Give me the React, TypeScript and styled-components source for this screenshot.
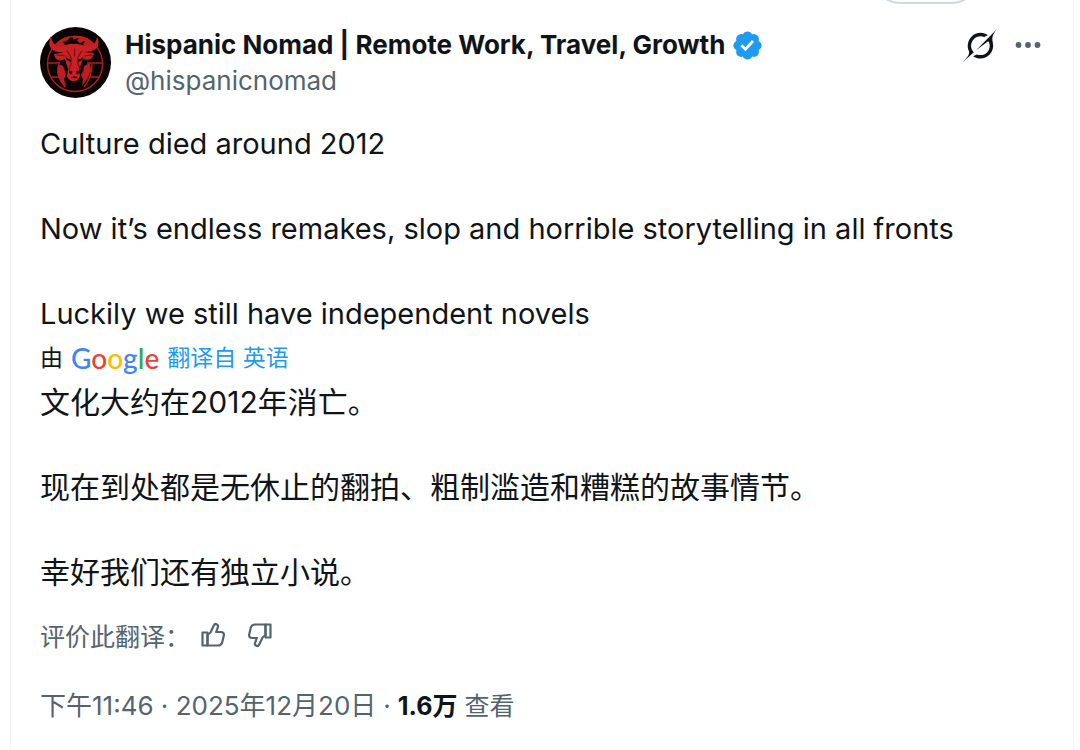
import React from 'react';
import styled, { createGlobalStyle } from 'styled-components';

const fontStack = '"Inter", "Noto Sans CJK SC", sans-serif';
const ink = '#0f1419';
const muted = '#536471';
const blue = '#1d9bf0';

const GlobalStyle = createGlobalStyle`
  *, *::before, *::after { box-sizing: border-box; }
  body {
    margin: 0;
    background: #fff;
    color: ${ink};
    font-family: ${fontStack};
  }
`;

const Column = styled.main`
  min-height: 100vh;
  margin: 0 6px 0 10px;
  border: solid #eff3f4;
  border-width: 0 1px;
`;

const PreviousBar = styled.div`
  display: flex;
  justify-content: flex-end;
  align-items: flex-end;
  height: 4px;
  padding-right: 92px;
  overflow: hidden;
`;

const OutlinePill = styled.button`
  flex: none;
  width: 110px;
  height: 60px;
  border: 2px solid #cfd9de;
  border-radius: 30px;
  background: #fff;
`;

const Post = styled.article`
  padding: 23px 29px 24px;
`;

const Header = styled.header`
  display: flex;
  align-items: flex-start;
  gap: 14px;
`;

const AvatarLink = styled.a`
  flex: none;
  display: block;
  height: 71px;
`;

const Names = styled.div`
  flex: 1;
  min-width: 0;
`;

const NameRow = styled.div`
  display: flex;
  align-items: center;
  gap: 6px;
  height: 36px;
`;

const NameLink = styled.a`
  color: ${ink};
  font-size: 26px;
  font-weight: 700;
  line-height: 36px;
  white-space: nowrap;
  text-decoration: none;
`;

const Handle = styled.a`
  display: block;
  color: ${muted};
  font-size: 26px;
  line-height: 36px;
  text-decoration: none;
`;

const Actions = styled.div`
  display: flex;
  align-items: center;
  gap: 15px;
  height: 36px;
`;

const IconButton = styled.button`
  display: flex;
  padding: 0;
  border: 0;
  background: none;
  color: ${(p) => p.color ?? muted};
  cursor: pointer;
`;

const Body = styled.div`
  display: grid;
  gap: 43px;
  font-size: 30px;
  line-height: 42px;
`;

const Original = styled(Body)`
  margin-top: 24px;
  font-size: 29px;
`;

const Paragraph = styled.p`
  margin: 0;
`;

const Attribution = styled.div`
  display: flex;
  align-items: center;
  gap: 8px;
  height: 46px;
  font-size: 23px;
  line-height: 46px;
`;

const GoogleWord = styled.span`
  font-family: "Lato", sans-serif;
  font-size: 28px;
  font-weight: 500;
  line-height: 42px;
`;

const Letter = styled.span<{ $tint: string }>`
  color: ${(p) => p.$tint};
`;

const SourceLink = styled.a`
  color: ${blue};
  text-decoration: none;
`;

const Rating = styled.div`
  display: flex;
  align-items: center;
  height: 36px;
  margin-top: 24px;
  color: ${muted};
  font-size: 25px;
`;

const Thumbs = styled.div`
  display: flex;
  gap: 21px;
  margin-left: 10px;
`;

const Meta = styled.div`
  display: flex;
  gap: 7px;
  margin-top: 35px;
  color: ${muted};
  font-size: 26px;
  line-height: 36px;
`;

const MetaLink = styled.a`
  color: inherit;
  text-decoration: none;
`;

const Views = styled.span`
  font-size: 25px;
`;

const ViewCount = styled.strong`
  color: ${ink};
  font-weight: 700;
`;

const googleLetters: [string, string][] = [
  ['G', '#4285f4'],
  ['o', '#ea4335'],
  ['o', '#fbbc05'],
  ['g', '#4285f4'],
  ['l', '#34a853'],
  ['e', '#ea4335'],
];

function BullAvatar() {
  return (
    <svg width="71" height="71" viewBox="0 0 71 71" aria-hidden="true">
      <circle cx="35.5" cy="35.5" r="35.5" fill="#0b0405" />
      <g fill="none" stroke="#b01d1f" strokeWidth="1.4">
        <circle cx="35" cy="37" r="27.5" />
        <path d="M8 36h12M47 36h15M11 50h14M43 50h16M44 60c5-6 8-14 8-23M25 60c-4-5-7-12-7-20" />
      </g>
      <g fill="#bb1f21">
        <path d="M15 18c4-5 9-8 15-9l-2 4-5 2 2 3-4 2zM33 9c9-1 17 2 22 9l-8 2-4-2 2-4-5 2-3-2 2-3-6 1z" />
        <path d="M18 37l5 2 3 8-2 5 2 8-6-6-3-8zM50 36l-6 3-3 9 2 4-1 7 5-7 4-9z" />
      </g>
      <path
        fill="#c92123"
        d="M11 9c-4 9-1 15 8 16l5 .5-10 1.500c1 6 5 8 11 5l3 10-1 7c1 3 3 5 6.500 5s5.500-2 6.500-5l-1-7 4-10c6 2 10 0 11-6l-10-1 5-.500c8-1 12-7 8-15-1 7-4 10-11 9.500-4-1.500-8-2-13-2s-7 .5-11 2c-7 .5-10-2.500-11-10z"
      />
      <path
        fill="none"
        stroke="#6a1213"
        strokeWidth="1.1"
        strokeLinecap="round"
        d="M17 28c3 0 5 0 8 1M53 28c-3 0-5 0-8 1M27 24l4 6v8l-2 4M42 24l-4 6v8l3 4M34.500 22v7"
      />
      <path fill="#1a0506" d="M25.500 30l5.500 3v2l-4.500-2zM43.500 30l-5.500 3v2l4.500-2zM29 43l3.500 1.500-1 3-2.500-1.500zM39.500 43l-3.500 1.500 1 3 2.500-1.500zM31 50.500c2-1.200 5-1.200 7 0-2 1-5 1-7 0zM25 37l2 6-1 4zM44 37l-2 6 1 4z" />
    </svg>
  );
}

function VerifiedBadge() {
  return (
    <svg width="33" height="33" viewBox="0 0 22 22" fill={blue} role="img" aria-label="认证账号">
      <path d="M20.396 11c-.018-.646-.215-1.275-.57-1.816-.354-.54-.852-.972-1.438-1.246.223-.607.27-1.264.14-1.897-.131-.634-.437-1.218-.882-1.687-.47-.445-1.053-.75-1.687-.882-.633-.13-1.29-.083-1.897.14-.273-.587-.704-1.086-1.245-1.44S11.647 1.62 11 1.604c-.646.017-1.273.213-1.813.568s-.969.854-1.24 1.44c-.608-.223-1.267-.272-1.902-.14-.635.13-1.22.436-1.69.882-.445.47-.749 1.055-.878 1.688-.13.633-.08 1.29.144 1.896-.587.274-1.087.705-1.443 1.245-.356.54-.555 1.17-.574 1.817.02.647.218 1.276.574 1.817.356.54.856.972 1.443 1.245-.224.606-.274 1.263-.144 1.896.13.634.433 1.218.877 1.688.47.443 1.054.747 1.687.878.633.132 1.29.084 1.897-.136.274.586.705 1.084 1.246 1.439.54.354 1.17.551 1.816.569.647-.016 1.276-.213 1.817-.567s.972-.854 1.245-1.44c.604.239 1.266.296 1.903.164.636-.132 1.22-.447 1.68-.907.46-.46.776-1.044.908-1.681s.075-1.299-.165-1.903c.586-.274 1.084-.705 1.439-1.246.354-.54.551-1.17.569-1.816zM9.662 14.85l-3.429-3.428 1.293-1.302 2.072 2.072 4.4-4.794 1.347 1.246z" />
    </svg>
  );
}

function GrokIcon() {
  return (
    <svg width="34" height="33" viewBox="0 0 33 32" fill="currentColor" aria-hidden="true">
      <path d="M12.745 20.54l10.97-8.19c.539-.4 1.307-.244 1.564.38 1.349 3.288.746 7.241-1.938 9.955-2.683 2.714-6.417 3.31-9.83 1.954l-3.728 1.745c5.347 3.697 11.84 2.782 15.898-1.324 3.219-3.255 4.216-7.692 3.284-11.693l.008.009c-1.351-5.878.332-8.227 3.782-13.031L33 0l-4.54 4.59v-.014L12.743 20.544m-2.263 1.987c-3.837-3.707-3.175-9.446.1-12.755 2.42-2.449 6.388-3.448 9.852-1.979l3.72-1.737c-.67-.49-1.53-1.017-2.515-1.387-4.455-1.854-9.789-.931-13.41 2.728-3.483 3.523-4.579 8.94-2.697 13.561 1.405 3.454-.899 5.898-3.22 8.364C1.49 30.2.666 31.074 0 32l10.478-9.466" />
    </svg>
  );
}

function MoreIcon() {
  return (
    <svg width="32" height="32" viewBox="0 0 32 32" fill="currentColor" aria-hidden="true">
      <circle cx="6.5" cy="16" r="2.9" />
      <circle cx="16" cy="16" r="2.9" />
      <circle cx="25.5" cy="16" r="2.9" />
    </svg>
  );
}

function ThumbIcon({ down = false }: { down?: boolean }) {
  return (
    <svg width="26" height="26" viewBox="0 0 26 26" fill="none" stroke="currentColor" strokeWidth="2.2" strokeLinejoin="round" aria-hidden="true">
      <g transform={down ? 'rotate(180 13 13)' : undefined}>
        <path d="M2.5 10.5h5v13h-5z" />
        <path d="M7.5 13l3-2.500 2.700-5.700.8-1.600c.5-1 1.600-1.400 2.600-.9 1.200.5 1.700 1.700 1.300 2.900l-1.700 4.800h4.600c2.300 0 3.500 1.600 3 3.600l-1.500 6.300c-.6 2.300-2.200 3.600-4.500 3.600H7.500z" />
      </g>
    </svg>
  );
}

export default function App() {
  return (
    <>
      <GlobalStyle />
      <Column>
        <PreviousBar>
          <OutlinePill type="button" aria-label="回复" />
        </PreviousBar>
        <Post>
          <Header>
            <AvatarLink href="#profile" aria-label="Hispanic Nomad">
              <BullAvatar />
            </AvatarLink>
            <Names>
              <NameRow>
                <NameLink href="#profile">Hispanic Nomad | Remote Work, Travel, Growth</NameLink>
                <VerifiedBadge />
              </NameRow>
              <Handle href="#profile">@hispanicnomad</Handle>
            </Names>
            <Actions>
              <IconButton type="button" color={ink} aria-label="Grok">
                <GrokIcon />
              </IconButton>
              <IconButton type="button" aria-label="更多">
                <MoreIcon />
              </IconButton>
            </Actions>
          </Header>

          <Original lang="en">
            <Paragraph>Culture died around 2012</Paragraph>
            <Paragraph>Now it’s endless remakes, slop and horrible storytelling in all fronts</Paragraph>
            <Paragraph>Luckily we still have independent novels</Paragraph>
          </Original>

          <Attribution>
            <span>由</span>
            <GoogleWord>
              {googleLetters.map(([char, tint], i) => (
                <Letter key={i} $tint={tint}>{char}</Letter>
              ))}
            </GoogleWord>
            <SourceLink href="#source">翻译自 英语</SourceLink>
          </Attribution>

          <Body lang="zh-CN">
            <Paragraph>文化大约在2012年消亡。</Paragraph>
            <Paragraph>现在到处都是无休止的翻拍、粗制滥造和糟糕的故事情节。</Paragraph>
            <Paragraph>幸好我们还有独立小说。</Paragraph>
          </Body>

          <Rating>
            <span>评价此翻译：</span>
            <Thumbs>
              <IconButton type="button" aria-label="赞">
                <ThumbIcon />
              </IconButton>
              <IconButton type="button" aria-label="踩">
                <ThumbIcon down />
              </IconButton>
            </Thumbs>
          </Rating>

          <Meta>
            <MetaLink href="#status">下午11:46 · 2025年12月20日</MetaLink>
            <span>·</span>
            <Views>
              <ViewCount>1.6万</ViewCount> 查看
            </Views>
          </Meta>
        </Post>
      </Column>
    </>
  );
}
